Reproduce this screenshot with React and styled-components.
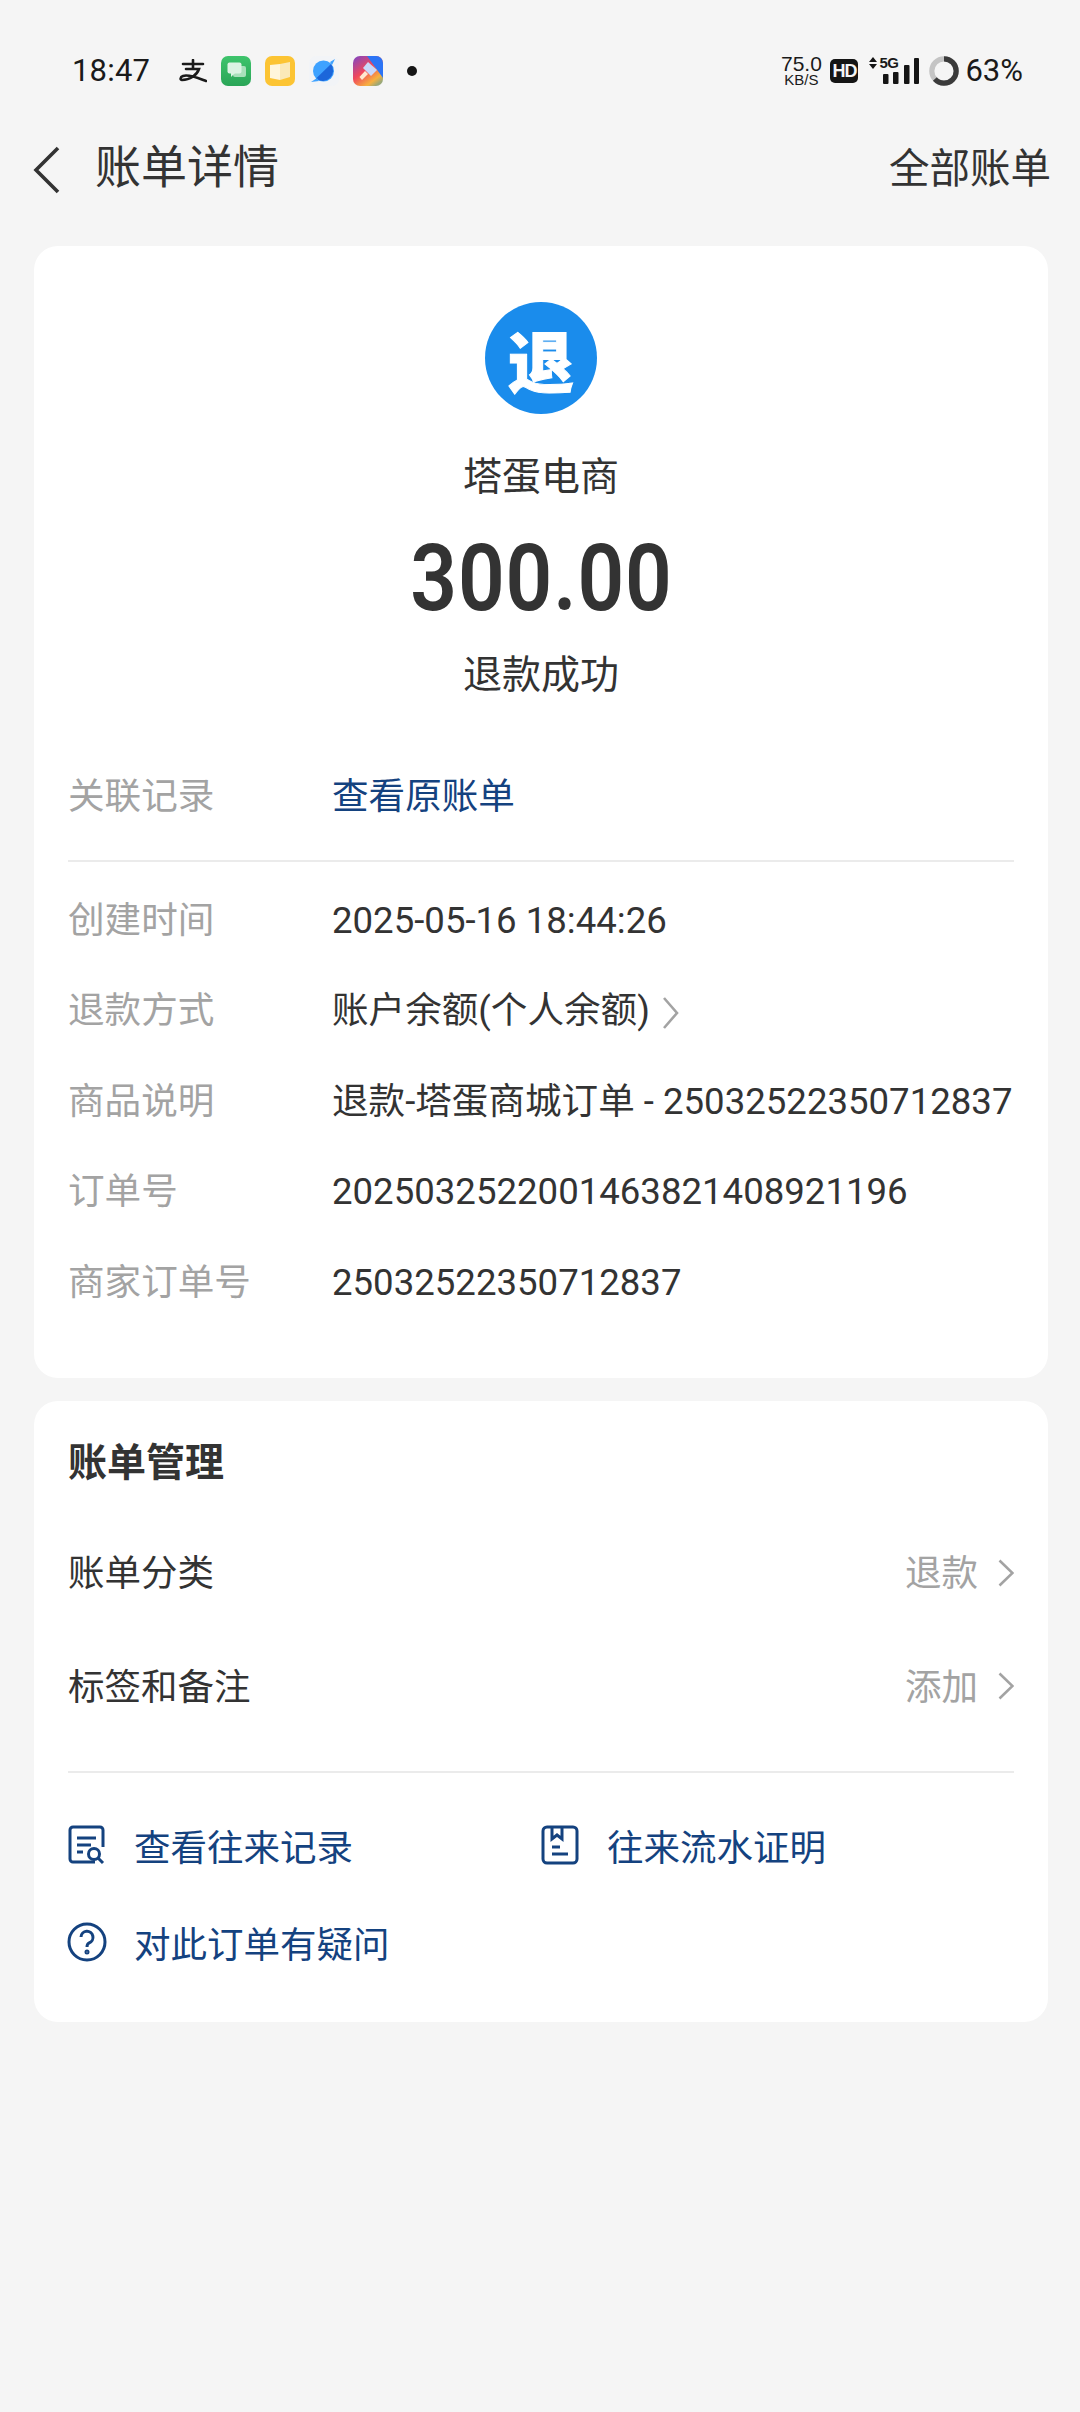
import React from 'react';
import styled, { createGlobalStyle } from 'styled-components';

const Global = createGlobalStyle`
  html, body { margin: 0; padding: 0; background: #f5f5f5; }
  body { width: 1080px; height: 2412px; overflow: hidden; font-family: Roboto, "Noto Sans CJK SC", sans-serif; }
  * { box-sizing: border-box; }
`;

const Page = styled.div`
  width: 1080px; height: 2412px; background: #f5f5f5; display: flex; flex-direction: column;
`;
const StatusBar = styled.div`
  height: 110px; padding: 51px 57px 0 72px; flex: none; display: flex; align-items: flex-start; justify-content: space-between; color: #1a1a1a;
`;
const StatusLeft = styled.div`
  display: flex; align-items: center; height: 40px;
`;
const Clock = styled.span`
  font-size: 31px; line-height: 40px; width: 107px; letter-spacing: 0.2px;
`;
const PayLogo = styled.svg`
  width: 28px; height: 24px; margin-right: 14px; flex: none; fill: none; stroke: #1a1a1a; stroke-width: 2.6; stroke-linecap: round; display: block;
`;
const AppIconWrap = styled.span`
  width: 30px; height: 30px; margin-right: 14px; display: block; flex: none;
  svg { display: block; }
`;
const Dot = styled.span`
  width: 10px; height: 10px; border-radius: 50%; background: #151515; margin-left: 10px;
`;
const StatusRight = styled.div`
  display: flex; align-items: center; height: 40px;
`;
const Speed = styled.div`
  width: 42px; display: flex; flex-direction: column; align-items: center; margin-right: 8px;
`;
const SpeedTop = styled.span`
  font-size: 21px; line-height: 17px; font-family: "Liberation Sans", sans-serif;
`;
const SpeedBottom = styled.span`
  font-size: 15px; line-height: 15px; font-family: "Liberation Sans", sans-serif;
`;
const HdBadge = styled.span`
  width: 28px; height: 24px; border-radius: 5px; background: #151515; color: #f5f5f5; font-size: 18px; font-weight: 900; text-align: center; line-height: 24px; margin-right: 11px; letter-spacing: -1px;
  font-family: "Liberation Sans", sans-serif;
`;
const SignalWrap = styled.div`
  position: relative; width: 50px; height: 28px; margin-right: 10px;
`;
const FiveG = styled.span`
  position: absolute; left: 10px; top: -3px; font-size: 15px; font-weight: 900; line-height: 17px; font-family: "Liberation Sans", sans-serif; letter-spacing: -0.6px;
`;
const Percent = styled.span`
  font-size: 31px; line-height: 40px; margin-left: 6px; font-family: Roboto, sans-serif;
`;
const NavBar = styled.div`
  height: 136px; flex: none; padding: 0 29px 24px 32px; display: flex; align-items: center; justify-content: space-between;
`;
const NavLeft = styled.div`
  display: flex; align-items: center; gap: 33px;
`;
const BackIcon = styled.svg`
  width: 30px; height: 48px; fill: none; stroke: #333; stroke-width: 3.6; margin-top: 8px; display: block;
`;
const Title = styled.span`
  font-size: 46px; line-height: 60px; color: #333; font-weight: 400; position: relative; top: 1px;
`;
const NavAction = styled.span`
  font-size: 40.5px; line-height: 60px; color: #333; padding-top: 6px;
`;
const Card = styled.section`
  margin: 0 32px 0 34px; background: #fff; border-radius: 24px; flex: none; padding: 0 34px;
`;
const HeroCard = styled(Card)`
  height: 1132px; margin-bottom: 23px; padding-top: 56px;
`;
const Hero = styled.div`
  display: flex; flex-direction: column; align-items: center; height: 450px;
`;
const Badge = styled.div`
  width: 112px; height: 112px; border-radius: 50%; background: #1a8cec; color: #fff; font-family: "Noto Sans CJK SC", sans-serif; font-weight: 900; font-size: 66px; line-height: 112px; text-align: center; -webkit-text-stroke: 1px #fff;
`;
const Merchant = styled.div`
  font-size: 39px; line-height: 52px; color: #333; margin-top: 37px;
`;
const Amount = styled.div`
  font-size: 92px; line-height: 100px; font-weight: 600; color: #333; margin-top: 26px; letter-spacing: 1px; transform: scaleX(0.89);
`;
const Status = styled.div`
  font-size: 39px; line-height: 52px; color: #333; margin-top: 20px;
`;
const Row = styled.div`
  display: flex; align-items: baseline; height: 90.6px; line-height: 90px;
`;
const LinkedRow = styled(Row)`
  height: 90px;
`;
const Label = styled.span`
  width: 264px; flex: none; font-size: 36.6px; color: #a3a3a3;
`;
const Value = styled.span`
  font-size: 36.6px; color: ${p => p.$link ? '#14427f' : '#333'}; white-space: nowrap; display: inline-flex; align-items: center;
`;
const Divider = styled.div`
  height: 1.5px; background: #ebebeb; margin: ${p => p.$m};
`;
const Chev = styled.svg`
  width: 16px; height: 30px; fill: none; stroke: #a3a3a3; stroke-width: 2.6; display: block; flex: none; position: relative; top: 2px;
`;
const InlineChev = styled.svg`
  width: 17px; height: 34px; fill: none; stroke: #a3a3a3; stroke-width: 2.6; display: block; flex: none; margin-left: 12px; position: relative; top: 2px;
`;
const ManageCard = styled(Card)`
  height: 621px; padding-top: 34px;
`;
const ManageTitle = styled.div`
  font-size: 39px; line-height: 56px; font-weight: 700; color: #333; margin-bottom: 23px;
`;
const ManageRow = styled.div`
  display: flex; align-items: center; justify-content: space-between; height: 113.5px;
`;
const ManageLabel = styled.span`
  font-size: 36.5px; color: #333;
`;
const ManageRight = styled.span`
  display: flex; align-items: center; gap: 20px; font-size: 36.5px; color: #a3a3a3;
`;
const Links = styled.div`
  display: grid; grid-template-columns: 473px 1fr; grid-auto-rows: 97px;
`;
const LinkItem = styled.div`
  display: flex; align-items: center; gap: 26px; color: #14427f; font-size: 36.5px;
  svg { width: 40px; height: 40px; flex: none; fill: none; stroke: #14427f; stroke-width: 3; margin-left: -1px; margin-right: 1px; }
`;

const infoRows = [
  ['创建时间', '2025-05-16 18:44:26'],
  ['退款方式', '账户余额(个人余额)', true],
  ['商品说明', '退款-塔蛋商城订单 - 25032522350712837'],
  ['订单号', '2025032522001463821408921196'],
  ['商家订单号', '25032522350712837'],
];

export default function App() {
  return (
    <Page>
      <Global />
      <StatusBar>
        <StatusLeft>
          <Clock>18:47</Clock>
          <PayLogo viewBox="0 0 28 24">
            <path d="M4 5 H24 M14 1 V9 M7 10 H20 C18 16 11 21 3 21 C1 21 1 18 4 17 C10 15 19 19 27 22" />
          </PayLogo>
          <AppIconWrap>
            <svg width="30" height="30" viewBox="0 0 30 30">
              <defs>
                <linearGradient id="gg" x1="0" y1="0" x2="0" y2="1">
                  <stop offset="0" stopColor="#3ec46c" />
                  <stop offset="1" stopColor="#2aa557" />
                </linearGradient>
              </defs>
              <rect width="30" height="30" rx="7" fill="url(#gg)" />
              <rect x="12" y="10" width="13" height="11" rx="2" fill="#a9e0bb" />
              <rect x="6.5" y="6.5" width="14" height="11" rx="2" fill="#dcf3e3" />
              <path d="M10 17 V21 L14 17 Z" fill="#dcf3e3" />
            </svg>
          </AppIconWrap>
          <AppIconWrap>
            <svg width="30" height="30" viewBox="0 0 30 30">
              <rect width="30" height="30" rx="7" fill="#fcc433" />
              <path d="M5 9 L15 8 V24 L5 22 Z" fill="#fff6dc" />
              <path d="M25 6 L15 8 V24 L25 21 Z" fill="#fbe9b8" />
            </svg>
          </AppIconWrap>
          <AppIconWrap>
            <svg width="30" height="30" viewBox="0 0 30 30">
              <rect width="30" height="30" rx="7" fill="#f2f4f7" />
              <circle cx="14.5" cy="15" r="10.5" fill="#3ea2ff" />
              <path d="M7 22.5 A10.5 10.5 0 0 0 22 8 Z" fill="#1c66da" />
              <path d="M2 26 L8 22 L10 25 Z M21 6 L26 3 L23 9 Z" fill="#3ea2ff" />
            </svg>
          </AppIconWrap>
          <AppIconWrap>
            <svg width="30" height="30" viewBox="0 0 30 30">
              <defs>
                <linearGradient id="pg" x1="0" y1="0" x2="0.75" y2="1">
                  <stop offset="0" stopColor="#7b46c8" />
                  <stop offset="0.5" stopColor="#f0475c" />
                  <stop offset="0.85" stopColor="#f7b13f" />
                  <stop offset="1" stopColor="#9aa878" />
                </linearGradient>
              </defs>
              <rect width="30" height="30" rx="7" fill="url(#pg)" />
              <path d="M14 0 H23 A7 7 0 0 1 30 7 V22 Z" fill="#2c74f5" />
              <path d="M15 6 L24 14 L18 20 L10 12 Z" fill="#c9d8fb" />
              <path d="M12 15 L15 18 L9 24 L6.5 21 Z" fill="#ffe8cf" />
            </svg>
          </AppIconWrap>
          <Dot />
        </StatusLeft>
        <StatusRight>
          <Speed>
            <SpeedTop>75.0</SpeedTop>
            <SpeedBottom>KB/S</SpeedBottom>
          </Speed>
          <HdBadge>HD</HdBadge>
          <SignalWrap>
            <svg width="50" height="28" viewBox="0 0 50 28" style={{ display: 'block' }}>
              <path d="M0 5 L4 0 L8 5 Z M0 7 L8 7 L4 12 Z" fill="#151515" />
              <rect x="14" y="17" width="5.5" height="10" rx="1" fill="#151515" />
              <rect x="24" y="15" width="5.5" height="12" rx="1" fill="#151515" />
              <rect x="35" y="8" width="5.5" height="19" rx="1" fill="#151515" />
              <rect x="45" y="1" width="5" height="26" rx="1" fill="#151515" />
            </svg>
            <FiveG>5G</FiveG>
          </SignalWrap>
          <svg width="30" height="30" viewBox="0 0 32 32">
            <circle cx="16" cy="16" r="13" fill="none" stroke="#c4c4c4" strokeWidth="5.5" />
            <circle cx="16" cy="16" r="13" fill="none" stroke="#3a3a3a" strokeWidth="5.5" strokeDasharray="51.5 82" transform="rotate(-90 16 16)" />
          </svg>
          <Percent>63%</Percent>
        </StatusRight>
      </StatusBar>

      <NavBar>
        <NavLeft>
          <BackIcon viewBox="0 0 30 48"><path d="M26 2 L4 24 L26 46" /></BackIcon>
          <Title>账单详情</Title>
        </NavLeft>
        <NavAction>全部账单</NavAction>
      </NavBar>

      <HeroCard>
        <Hero>
          <Badge>退</Badge>
          <Merchant>塔蛋电商</Merchant>
          <Amount>300.00</Amount>
          <Status>退款成功</Status>
        </Hero>
        <LinkedRow>
          <Label>关联记录</Label>
          <Value $link>查看原账单</Value>
        </LinkedRow>
        <Divider $m="18px 0 14px" />
        {infoRows.map(([k, v, arrow]) => (
          <Row key={k}>
            <Label>{k}</Label>
            <Value>{v}{arrow && <InlineChev viewBox="0 0 17 34"><path d="M2 2 L15 17 L2 32" /></InlineChev>}</Value>
          </Row>
        ))}
      </HeroCard>

      <ManageCard>
        <ManageTitle>账单管理</ManageTitle>
        <ManageRow>
          <ManageLabel>账单分类</ManageLabel>
          <ManageRight>退款<Chev viewBox="0 0 16 30"><path d="M1.5 2.5 L14.5 15 L1.5 27.5" /></Chev></ManageRight>
        </ManageRow>
        <ManageRow>
          <ManageLabel>标签和备注</ManageLabel>
          <ManageRight>添加<Chev viewBox="0 0 16 30"><path d="M1.5 2.5 L14.5 15 L1.5 27.5" /></Chev></ManageRight>
        </ManageRow>
        <Divider $m="30px 0 24px" />
        <Links>
          <LinkItem>
            <svg viewBox="0 0 40 40">
              <path d="M28 37 H6 A3 3 0 0 1 3 34 V5 A3 3 0 0 1 6 2 H33 A3 3 0 0 1 36 5 V22" />
              <path d="M10 13 H29 M10 20 H24 M10 27 H16" />
              <circle cx="27" cy="29" r="5.5" />
              <path d="M31 33 L36 38" />
            </svg>
            查看往来记录
          </LinkItem>
          <LinkItem>
            <svg viewBox="0 0 40 40">
              <rect x="3" y="2" width="34" height="36" rx="4" />
              <path d="M12 2 V14 L17 10 L22 14 V2" />
              <path d="M12 22 H20 M12 29 H28" />
            </svg>
            往来流水证明
          </LinkItem>
          <LinkItem>
            <svg viewBox="0 0 40 40">
              <circle cx="20" cy="20" r="18" />
              <path d="M14 15 A6 6 0 1 1 22 21 Q20 22 20 25" />
              <circle cx="20" cy="30" r="1" />
            </svg>
            对此订单有疑问
          </LinkItem>
        </Links>
      </ManageCard>
    </Page>
  );
}
